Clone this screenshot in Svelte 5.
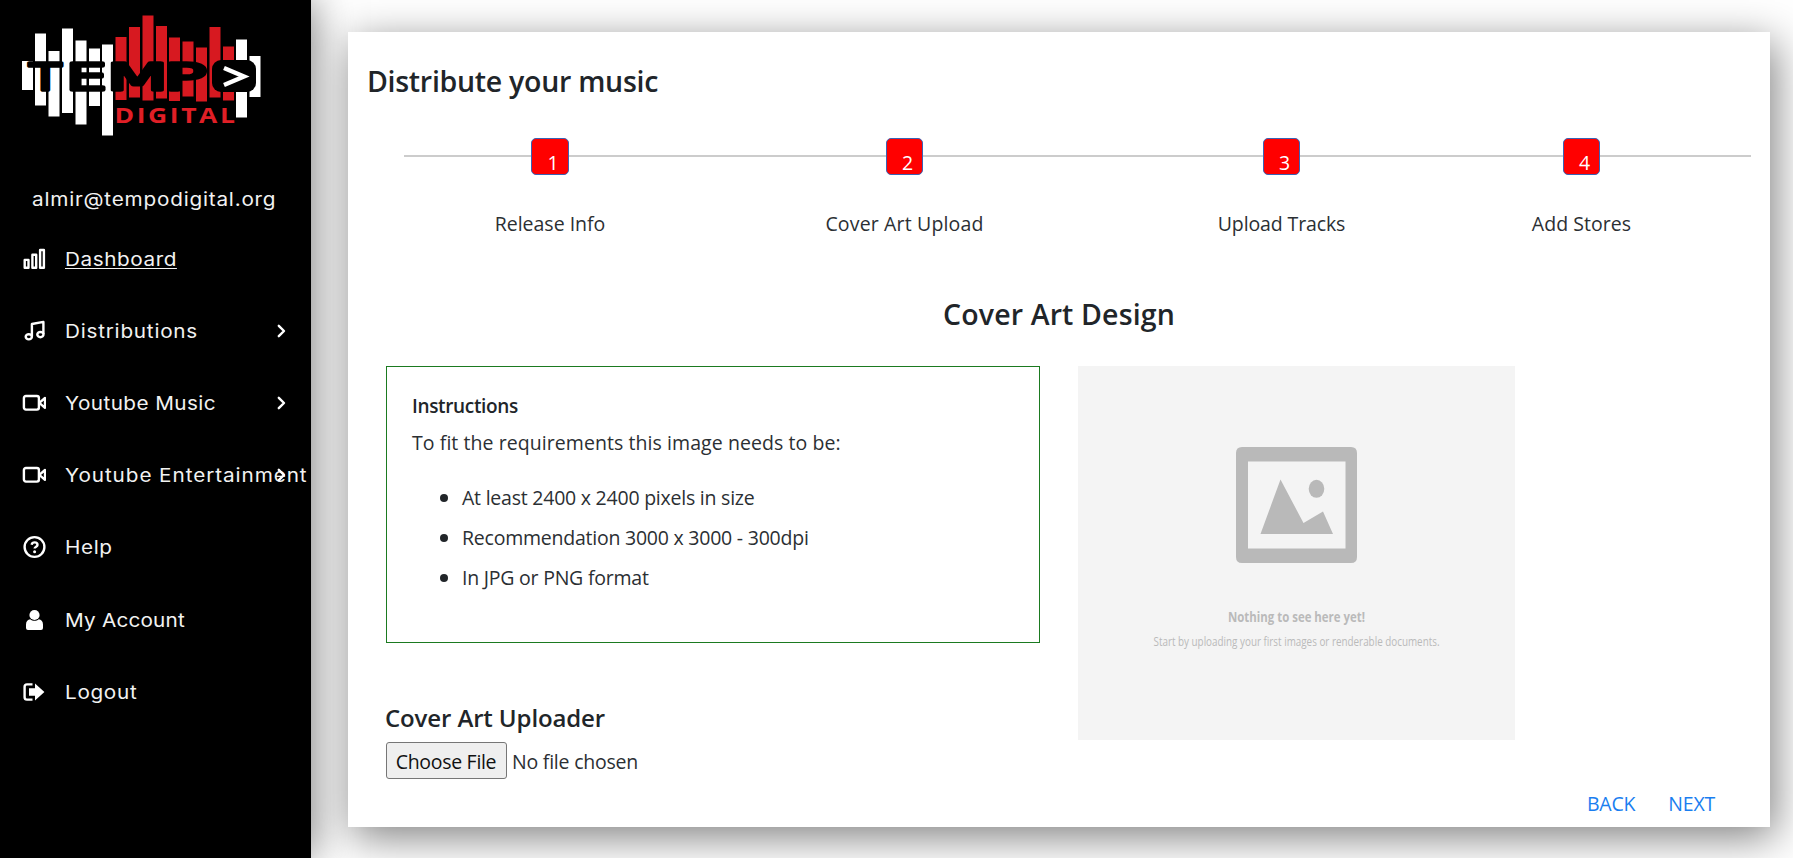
<script>
  const bars = [
    [22, 61, 90, 0], [35, 33.5, 105.5, 0], [48.5, 51, 116.5, 0], [62, 28.5, 113, 0], [75.5, 40.5, 124.5, 0],
    [89, 48.5, 106, 0], [102, 44.5, 135.5, 0], [115.5, 37, 100, 1], [129, 27, 97.5, 1], [142.5, 15.5, 100.5, 1],
    [156, 26, 98.5, 1], [169, 37.5, 101, 1], [182.5, 41.5, 96.5, 1], [196, 47.5, 101.5, 1], [209.5, 27, 97.5, 1],
    [223, 46.5, 100.5, 1], [236, 39.5, 117.5, 0], [249.5, 56, 97, 0]
  ];
  const letters = [['T', 29.5, 1.36], ['E', 66, 1.7], ['M', 107, 1.85], ['P', 164, 1.85]];
  const nav = [
    { label: 'Dashboard', icon: 'bars', ls: 0.5, active: true },
    { label: 'Distributions', icon: 'music', ls: 0.68, more: true },
    { label: 'Youtube Music', icon: 'video', ls: 0.38, more: true },
    { label: 'Youtube Entertainment', icon: 'video', ls: 0.82, more: true },
    { label: 'Help', icon: 'help', ls: 0.55 },
    { label: 'My Account', icon: 'user', ls: 0.18 },
    { label: 'Logout', icon: 'logout', ls: 0.6 }
  ];
  const steps = [
    { label: 'Release Info', ls: 0 },
    { label: 'Cover Art Upload', ls: 0.16 },
    { label: 'Upload Tracks', ls: -0.12 },
    { label: 'Add Stores', ls: 0.05 }
  ];
</script>

<div class="page">
  <aside>
    <svg class="logo" width="311" height="150" viewBox="0 0 311 150">
      {#each bars as [x, top, bottom, red]}
        <rect {x} y={top} width="11" height={bottom - top} fill={red ? '#d71920' : '#fff'} />
      {/each}
      {#each letters as [ch, x, sx]}
        <text class="tempo" transform="translate({x} 90) scale({sx} 1)">{ch}</text>
      {/each}
      <rect x="212" y="60" width="44" height="32" rx="9" fill="#000" />
      <path d="M224 68 244 76.5 224 85" fill="none" stroke="#fff" stroke-width="4.4" />
      <text class="digital" x="114.5" y="123" textLength="123" lengthAdjust="spacingAndGlyphs">DIGITAL</text>
    </svg>
    <div class="email"><span class="wide" style="letter-spacing:0.7px">almir@tempodigital.org</span></div>
    <nav>
      {#each nav as item}
        <div class="item">
          <svg class="icon" width="24" height="24" viewBox="0 0 24 24">
            {#if item.icon === 'bars'}
              <path d="M2.7 12.9H6.5V20.8H2.7ZM10.4 7.8H14.2V20.8H10.4ZM18.1 3H21.9V20.8H18.1Z" />
            {:else if item.icon === 'music'}
              <path d="M9.9 17.2V5L21.4 2.9V15" />
              <ellipse cx="6.8" cy="17.8" rx="3.1" ry="2.6" />
              <ellipse cx="18.4" cy="15.6" rx="3.1" ry="2.6" />
            {:else if item.icon === 'video'}
              <rect x="1.9" y="5" width="15" height="13.6" rx="2" />
              <path d="M17.3 11.9 23 7V16.8Z" />
            {:else if item.icon === 'help'}
              <circle cx="12.5" cy="12" r="9.9" />
              <path d="M9.6 9.7C10 8.1 11.2 7.4 12.6 7.4 14.2 7.4 15.5 8.4 15.5 9.9 15.5 11.6 12.6 11.8 12.6 13.6" />
              <circle class="solid" cx="12.6" cy="16.7" r="1.5" />
            {:else if item.icon === 'user'}
              <circle class="solid" cx="12.5" cy="7" r="5.1" />
              <path class="solid" d="M4 20V16.5C4 13 6 11.4 8.2 11.2 10.8 13.2 14.2 13.2 16.8 11.2 19 11.4 21 13 21 16.5V20Q21 22 19 22H6Q4 22 4 20Z" />
            {:else}
              <path d="M10.5 4.4H5Q2.6 4.4 2.6 6.8V17.2Q2.6 19.6 5 19.6H10.5" />
              <path class="solid" d="M7 8.3H13V3.5L22.4 12 13 20.4V15.7H7Z" />
            {/if}
          </svg>
          <span class="wide" class:active={item.active} style="letter-spacing:{item.ls}px">{item.label}</span>
          {#if item.more}
            <svg class="chev" width="10" height="14" viewBox="0 0 10 14"><path d="M1.8 1.8 7 7 1.8 12.2" /></svg>
          {/if}
        </div>
      {/each}
    </nav>
  </aside>

  <main>
    <h3 class="title">Distribute your music</h3>
    <div class="steps">
      {#each steps as step, i}
        <div class="step">
          <span class="num">{i + 1}</span>
          <span class="name" style="letter-spacing:{step.ls}px">{step.label}</span>
        </div>
      {/each}
    </div>
    <h3 class="heading">Cover Art Design</h3>
    <div class="columns">
      <div class="left">
        <section class="box">
          <h6>Instructions</h6>
          <p>To fit the requirements this image needs to be:</p>
          <ul>
            <li>At least 2400 x 2400 pixels in size</li>
            <li>Recommendation 3000 x 3000 - 300dpi</li>
            <li>In JPG or PNG format</li>
          </ul>
        </section>
        <h4>Cover Art Uploader</h4>
        <div class="file">
          <button type="button">Choose File</button>
          <span>No file chosen</span>
        </div>
      </div>
      <svg class="preview" width="437" height="374" viewBox="0 0 437 374">
        <rect width="437" height="374" fill="#f4f4f4" />
        <g fill="#b9b9b9">
          <path fill-rule="evenodd" d="M164 81H273Q279 81 279 87V191Q279 197 273 197H164Q158 197 158 191V87Q158 81 164 81ZM170 95.5V182.5H267.5V95.5Z" />
          <path d="M182.5 168 202.5 113.5 225.5 157 245 145.5 255 168Z" />
          <ellipse cx="238.5" cy="122.8" rx="7.8" ry="9" />
        </g>
        <g fill="#bababa" text-anchor="middle">
          <text x="218.5" y="255.5" class="t1" textLength="137" lengthAdjust="spacingAndGlyphs">Nothing to see here yet!</text>
          <text x="218.5" y="280" class="t2" textLength="286" lengthAdjust="spacingAndGlyphs">Start by uploading your first images or renderable documents.</text>
        </g>
      </svg>
    </div>
    <div class="actions"><a href="#back">BACK</a><a href="#next">NEXT</a></div>
  </main>
</div>

<style>
  :global(body) { margin: 0; background: #fff; }
  .page {
    display: flex;
    box-sizing: border-box;
    width: 1793px;
    height: 858px;
    overflow: hidden;
    font-family: 'Open Sans', 'Noto Sans', sans-serif;
    font-size: 19.5px;
    color: #2b2f33;
  }
  aside {
    flex: none;
    width: 311px;
    height: 858px;
    background: #000;
    color: #f2f2f2;
    box-shadow: 0 0 40px rgba(0, 0, 0, 0.55);
    font-family: Inter, sans-serif;
    font-size: 18.5px;
  }
  .logo { display: block; }
  .tempo {
    font: 38px 'DejaVu Sans', sans-serif;
    fill: #000;
    stroke: #000;
    stroke-width: 3.4;
    stroke-linejoin: round;
  }
  .digital { font: bold 20.5px 'Open Sans', sans-serif; letter-spacing: 2px; fill: #e01f26; }
  .email { height: 40px; margin-top: 29px; padding-left: 31.5px; line-height: 40px; }
  .wide { display: inline-block; white-space: nowrap; transform: scaleX(1.12); transform-origin: 0 50%; }
  .active { text-decoration: underline; text-decoration-thickness: 1.2px; text-underline-offset: 2px; text-decoration-skip-ink: none; }
  nav { padding-top: 4px; }
  .item { position: relative; display: flex; align-items: center; height: 72.1px; padding-left: 22px; }
  .item .wide { margin-left: 19px; line-height: 24px; }
  .icon, .chev { flex: none; fill: none; stroke: #fff; stroke-width: 2.4; stroke-linejoin: round; }
  .icon .solid { fill: #fff; stroke: none; }
  .chev { position: absolute; left: 277px; top: 28.5px; stroke-width: 2.4; stroke-linecap: round; }

  main {
    box-sizing: border-box;
    flex: none;
    width: 1422px;
    height: 795px;
    margin: 32px 0 0 37px;
    padding: 29px 19px 0;
    background: #fff;
    box-shadow: 5px 10px 40px rgba(0, 0, 0, 0.5);
  }
  h3, h4, h6, p, ul { margin: 0; }
  h3, h4, h6 { color: #212529; }
  h3 { font-size: 28.5px; font-weight: 600; line-height: 40px; }
  .title { letter-spacing: -0.28px; }
  .steps {
    display: grid;
    grid-template-columns: 292px 417px 337px 263px;
    width: 1347px;
    margin: 37px 0 0 37px;
    background: linear-gradient(#ccc, #ccc) 0 17px / 100% 2px no-repeat;
  }
  .step { display: flex; flex-direction: column; align-items: center; }
  .num {
    box-sizing: border-box;
    width: 37.5px;
    height: 37px;
    padding-left: 6px;
    border: 1px solid #3a62b4;
    border-radius: 5px;
    background: #f00;
    color: #fff;
    line-height: 47px;
    text-align: center;
  }
  .name { margin-top: 29px; line-height: 40px; white-space: nowrap; }
  .heading { margin-top: 50px; text-align: center; letter-spacing: 0.14px; }
  .columns { display: flex; gap: 38px; margin: 32px 0 0 19px; }
  .left { width: 654px; }
  .box { box-sizing: border-box; height: 277px; padding: 20px 25px; border: 1px solid #1b7a20; }
  h6 { font-size: 19px; font-weight: 600; line-height: 39px; letter-spacing: -0.35px; }
  p { margin-top: -1px; line-height: 36px; letter-spacing: 0.07px; }
  ul { margin-top: 17px; padding-left: 50px; list-style: none; }
  li { position: relative; line-height: 40px; letter-spacing: -0.23px; }
  li::before { content: ''; position: absolute; left: -22px; top: 16px; width: 8px; height: 8px; border-radius: 50%; background: #212529; }
  h4 { margin: 59px 0 0 -1px; font-size: 24px; font-weight: 600; line-height: 32px; letter-spacing: -0.12px; }
  .file { display: flex; align-items: center; gap: 5px; height: 37px; margin-top: 8px; letter-spacing: -0.22px; }
  button {
    box-sizing: border-box;
    width: 121px;
    height: 37px;
    padding: 3px 1px 0 0;
    border: 1px solid #767676;
    border-radius: 3px;
    background: #efefef;
    color: #111;
    font: inherit;
    letter-spacing: -0.3px;
    line-height: 32px;
  }
  .file span { padding-top: 2px; line-height: 32px; }
  .preview { display: block; }
  .t1 { font-size: 14px; font-weight: 700; }
  .t2 { font-size: 12.5px; }
  .actions { display: flex; justify-content: flex-end; gap: 33px; margin-top: 5px; padding-right: 36px; line-height: 40px; letter-spacing: -0.2px; }
  a { color: #1a7ef0; text-decoration: none; }
</style>
